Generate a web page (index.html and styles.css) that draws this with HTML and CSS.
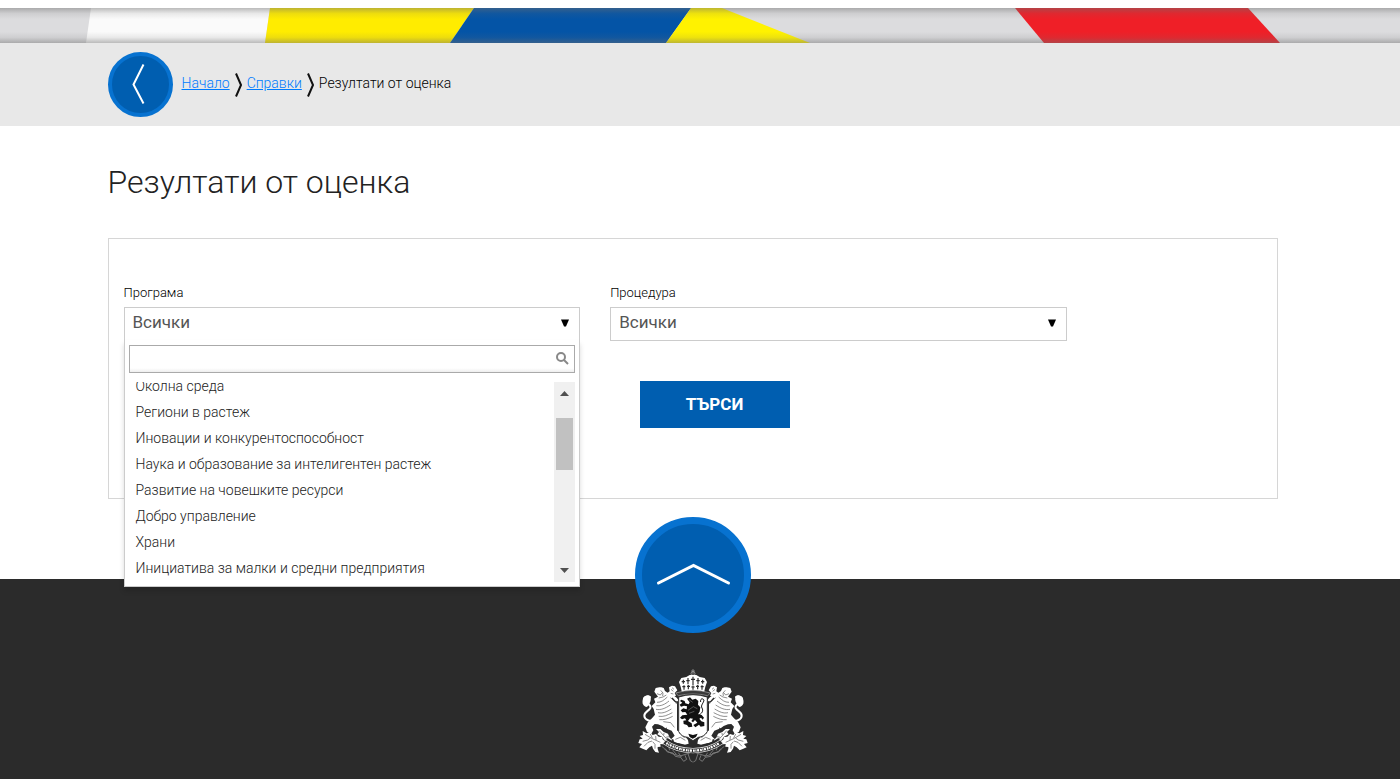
FILE: index.html
```html
<!DOCTYPE html>
<html lang="bg">
<head>
<meta charset="utf-8">
<meta name="viewport" content="width=device-width, initial-scale=1">
<title>Резултати от оценка</title>
<link rel="stylesheet" href="styles.css">
</head>
<body>
<div class="stripe">
  <svg class="stripe-art" viewBox="0 0 1400 35" preserveAspectRatio="none" aria-hidden="true">
    <path fill="#fafafa" d="M91 0H270L265 35H86z"/>
    <path fill="#ffec00" d="M270 0H474L450 35H265z"/>
    <path fill="#0454a6" d="M474 0H691L666 35H450z"/>
    <path fill="#fff200" d="M691 0H722L810 35H666z"/>
    <path fill="#ef1f27" d="M1015 0H1248L1280 35H1044z"/>
  </svg>
</div>

<nav class="crumb-bar" aria-label="Навигация">
  <div class="container crumbs">
    <a class="back" href="#" aria-label="Назад">
      <svg viewBox="0 0 65 65" aria-hidden="true"><path d="M35.500 12.500L25.500 32.500L35.500 51.500"/></svg>
    </a>
    <a class="crumb-text" href="#">Начало</a>
    <svg class="sep" viewBox="0 0 7 24" aria-hidden="true"><path d="M1 0.500L6 12L1 23.500"/></svg>
    <a class="crumb-text" href="#">Справки</a>
    <svg class="sep" viewBox="0 0 7 24" aria-hidden="true"><path d="M1 0.500L6 12L1 23.500"/></svg>
    <span class="crumb-text">Резултати от оценка</span>
  </div>
</nav>

<main class="content">
  <div class="container">
    <h1 class="title">Резултати от оценка</h1>
    <form class="search-box">
      <div class="field">
        <label for="program">Програма</label>
        <div class="select-wrap">
          <select id="program"><option>Всички</option></select>
          <svg class="arrow" viewBox="0 0 8 8" aria-hidden="true"><path d="M0 0.500H8L5 7.500H3z"/></svg>
          <div class="dropdown">
            <div class="filter">
              <input type="text" aria-label="Търсене на програма">
              <svg viewBox="0 0 13 13" aria-hidden="true"><circle cx="5" cy="5" r="4"/><path d="M8 8L12 12"/></svg>
            </div>
            <div class="results">
              <ul class="options" role="listbox" aria-label="Програма">
                <li role="option">Околна среда</li>
                <li role="option">Региони в растеж</li>
                <li role="option">Иновации и конкурентоспособност</li>
                <li role="option">Наука и образование за интелигентен растеж</li>
                <li role="option">Развитие на човешките ресурси</li>
                <li role="option">Добро управление</li>
                <li role="option">Храни</li>
                <li role="option">Инициатива за малки и средни предприятия</li>
              </ul>
              <div class="scrollbar" aria-hidden="true">
                <svg viewBox="0 0 9 5"><path d="M0 5L4.500 0L9 5z"/></svg>
                <span class="thumb"></span>
                <svg viewBox="0 0 9 5"><path d="M0 0L4.500 5L9 0z"/></svg>
              </div>
            </div>
          </div>
        </div>
      </div>
      <div class="field">
        <label for="procedure">Процедура</label>
        <div class="select-wrap">
          <select id="procedure"><option>Всички</option></select>
          <svg class="arrow" viewBox="0 0 8 8" aria-hidden="true"><path d="M0 0.500H8L5 7.500H3z"/></svg>
        </div>
      </div>
      <div class="actions"><button class="submit" type="submit">ТЪРСИ</button></div>
    </form>
  </div>
</main>

<footer class="footer">
  <div class="container footer-inner">
    <a class="to-top" href="#" aria-label="Нагоре">
      <svg viewBox="0 0 116 116" aria-hidden="true"><path d="M23.500 66L58.500 48.500L93.500 66"/></svg>
    </a>
    <svg class="crest" viewBox="24 24 330 288" role="img" aria-label="Герб на Република България">
      <defs>
        <g id="half">
          <!-- tail -->
          <path fill="none" stroke="#fff" stroke-width="6" stroke-linecap="round" d="M76 180C60 186 44 180 43 168C42 156 56 154 61 144C66 132 46 132 42 120C40 112 52 106 60 111"/>
          <path fill="#fff" d="M38 130C35 115 45 104 57 107C67 112 62 127 53 139C48 144 40 138 38 130z"/>
          <!-- head, mane and body -->
          <path fill="#fff" d="M78 102L73 95L77 84L88 82L94 82L101 84L105 93L114 99L118 108L128 104L140 113L147 122V214L134 218L126 208L116 200L106 205L97 198L84 193L74 192L66 200L70 211L64 221L51 215L46 202L54 186L66 175L75 164L71 147L65 138L76 127L72 116L84 110z"/>
          <path fill="#fff" d="M108 102L119 94L117 82L126 77L135 79L142 91L134 99L138 107L122 112z"/>
          <path fill="#fff" d="M112 192L132 192L146 211L151 230L138 239L124 237L134 227L125 212L110 206z"/>
          <g fill="none" stroke="#444" stroke-width="1.800">
            <path d="M81 101L91 105L97 98M92 91L99 99L98 108M86 114L99 111L109 105M81 127C94 127 101 121 112 111M79 137C93 139 105 133 117 123M78 148C92 151 106 145 121 135M84 158C98 161 109 156 124 147M86 169C101 171 111 166 127 158M88 179C103 180 112 177 128 169M121 113L133 121L140 132M100 185L122 188L133 202"/>
            <path d="M123 88L130 94M122 100L130 102M126 83L132 88"/>
          </g>
          <path fill="none" stroke="#2b2b2b" stroke-width="4" d="M126 114L134 123L143 128M143 124V212"/>
          <path fill="#2b2b2b" d="M82 196L97 202L108 209L100 214L88 207L75 207z"/>
          <!-- oak leaves -->
          <path fill="#fff" d="M38 213L50 220L60 215L68 225L78 222L86 230L96 231L98 238L107 245L99 253L91 252L92 260L83 261L83 267L87 278L76 276L69 266L66 257L58 262L49 271L38 266L28 262L36 252L25 249L29 238L38 236L29 228L39 225z"/>
          <path fill="none" stroke="#555" stroke-width="2" d="M45 223L65 235L91 247M38 244L53 240L61 234M42 259L54 247L66 243M61 222L67 234M77 228L78 240M75 266L75 253L68 245"/>
          <path fill="#fff" d="M78 207L91 207L101 216L114 221L119 233L127 240L117 250L106 244L96 230L82 223L87 216z"/>
          <path fill="none" stroke="#555" stroke-width="2" d="M88 212L100 226L115 242M102 219L101 226M117 230L107 232"/>
          <path fill="#fff" d="M130 235L151 218L162 225L174 240L176 251L164 254L148 250L132 248z"/>
          <path fill="none" stroke="#555" stroke-width="2" d="M136 238L151 232L166 241M153 223L164 234"/>
          <!-- crossed stems -->
          <path fill="none" stroke="#858585" stroke-width="2.500" d="M96 259C109 275 125 282 151 288L188 276M106 266L112 276L129 279L136 289L152 292L161 304L170 298L165 286M128 270L139 283M145 278L154 291M174 281L181 302L188 306M116 260L119 271"/>
        </g>
      </defs>
      <use href="#half"/>
      <use href="#half" transform="translate(378 0) scale(-1 1)"/>

      <!-- crown -->
      <path fill="none" stroke="#aaa" stroke-width="2" d="M189 27V45M183 33H195"/>
      <circle cx="189" cy="41" r="6" fill="none" stroke="#bbb" stroke-width="2"/>
      <path fill="#fff" d="M147 66L154 54L169 51L179 45H199L209 51L224 54L231 66L226 80L222 98Q189 88 156 98L152 80z"/>
      <path fill="none" stroke="#2b2b2b" stroke-width="3.500" d="M160 59V71M155 65H165M174 54V73M169 62H179M189 50V76M183 58H195M204 54V73M199 62H209M218 59V71M213 65H223M157 80H166M162 76V89M171 79H180M175 75V88M184 81H194M189 77V89M198 79H207M203 75V88M212 80H221M216 76V89"/>
      <path fill="#3a3a3a" stroke="#aaa" stroke-width="2" d="M137 99Q189 83 241 99L233 107Q189 97 145 107z"/>

      <!-- shield -->
      <path fill="#fff" stroke="#2b2b2b" stroke-width="3" d="M146 111Q189 97 232 111V215Q222 231 205 232L189 242L173 232Q155 231 146 215z"/>
      <g fill="#111">
        <path d="M171 116L180 112L187 119L197 116L205 123L204 134L211 142L209 155L204 163L215 165L222 173L218 179L213 173L208 176L214 184L223 187V198L212 200L207 194L196 202L190 195L202 188L195 180L189 187L184 183L189 176L180 175L174 183L185 190L187 200L176 202L171 195L161 192L160 182L169 181L165 175L156 178L150 173L157 166L172 164L166 156L157 157L152 151L160 145L170 148L171 139L162 137L153 140L149 134L157 128L150 123L154 119L164 123L166 130L176 133L179 127z"/>
        <path d="M175 221L189 225L203 221L198 231L188 236L179 231z"/>
      </g>
      <path fill="none" stroke="#111" stroke-width="3" d="M204 166C216 161 221 153 216 144C211 136 221 129 222 120C217 113 210 117 212 126"/>
      <path fill="none" stroke="#999" stroke-width="1.500" d="M177 119L188 127M174 151L190 140L202 146M177 160L193 154"/>

      <!-- motto ribbon -->
      <path fill="none" stroke="#2b2b2b" stroke-width="22" d="M106 243Q138 267 189 268Q240 267 272 243"/>
      <path fill="none" stroke="#ddd" stroke-width="16" d="M102 245Q138 271 189 272Q240 271 276 245"/>
      <path fill="none" stroke="#2b2b2b" stroke-width="12" d="M104 246Q138 271 189 272Q240 271 274 246"/>
      <path fill="none" stroke="#fff" stroke-width="7" stroke-dasharray="5 2 3 2 6 3" d="M109 249Q144 271 189 272Q234 271 269 249"/>
    </svg>
  </div>
</footer>
</body>
</html>
```
FILE: styles.css
```css
* { box-sizing: border-box; }

body {
  margin: 0;
  padding-top: 8px;
  background: #fff;
  color: #000;
  font-family: Roboto, "Noto Sans", sans-serif;
  font-size: 14px;
  font-weight: 300;
  line-height: 20px;
}

.container {
  width: 100%;
  max-width: 1170px;
  margin: 0 auto;
}

.stripe {
  position: relative;
  height: 35px;
  background: #dcdcde;
}

.stripe::after {
  content: "";
  position: absolute;
  inset: 0;
  background: linear-gradient(rgba(110, 110, 110, .45), rgba(110, 110, 110, .12) 16%, transparent 32%, transparent 68%, rgba(110, 110, 110, .12) 84%, rgba(110, 110, 110, .45));
}

.stripe-art {
  display: block;
  width: 100%;
  height: 100%;
}

.crumb-bar {
  padding: 9px 15px 9px 0;
  background: #e8e8e8;
}

.crumbs {
  display: flex;
  align-items: center;
  gap: 5px;
}

.back {
  width: 65px;
  height: 65px;
  margin-right: 4px;
  border: 4px solid #0772d0;
  border-radius: 50%;
  background: #005eb0;
}

.back svg {
  display: block;
  width: 65px;
  height: 65px;
  margin: -4px;
  fill: none;
  stroke: #fff;
  stroke-width: 2;
}

.crumb-text { padding-bottom: 3px; }

a.crumb-text { color: #007bff; }

.sep {
  width: 7px;
  height: 24px;
  fill: none;
  stroke: #111;
  stroke-width: 2;
}

.content { padding: 32px 15px 80px 0; }

.title {
  margin: 0 0 32px;
  color: #222;
  font-size: 32px;
  font-weight: 300;
  line-height: 48px;
}

.search-box {
  display: grid;
  grid-template-columns: 5fr 5fr 2fr;
  padding: 44px 0 70px;
  border: 1px solid #d6d6d6;
}

.field {
  min-width: 0;
  padding: 0 15px;
}

.field label {
  display: block;
  margin-bottom: 4px;
  font-size: 13px;
}

.select-wrap { position: relative; }

.select-wrap select {
  display: block;
  width: 100%;
  height: 34px;
  padding: 0 28px 4px 8px;
  border: 1px solid #ccc;
  border-radius: 0;
  appearance: none;
  background: #fff;
  color: #555;
  font-family: inherit;
  font-size: 17px;
  font-weight: 400;
}

.arrow {
  position: absolute;
  top: 12px;
  right: 11px;
  width: 8px;
  height: 8px;
}

.dropdown {
  position: absolute;
  top: 33px;
  left: 0;
  width: 100%;
  padding: 5px 4px 4px;
  border: 1px solid #ccc;
  border-top: 0;
  background: #fff;
  box-shadow: 0 4px 5px rgba(0, 0, 0, .15);
  z-index: 2;
}

.filter { position: relative; }

.filter input {
  display: block;
  width: 100%;
  height: 28px;
  padding: 4px 20px 4px 5px;
  border: 1px solid #aaa;
  border-radius: 0;
  background: linear-gradient(#fff 85%, #eee);
  font: inherit;
}

.filter svg {
  position: absolute;
  top: 7px;
  right: 6px;
  width: 13px;
  height: 13px;
  fill: none;
  stroke: #888;
  stroke-width: 2;
}

.results {
  display: flex;
  height: 200px;
  margin-top: 9px;
  overflow: hidden;
}

.options {
  display: flex;
  flex: 1;
  flex-direction: column;
  justify-content: flex-end;
  margin: 0;
  padding: 0 7px 1px;
  list-style: none;
}

.options li {
  flex: none;
  padding: 3px 0;
  color: #222;
}

.scrollbar {
  display: flex;
  flex-direction: column;
  align-items: center;
  width: 21px;
  padding: 9px 2px;
  background: #f0f0f0;
}

.scrollbar svg {
  flex: none;
  width: 9px;
  height: 5px;
  fill: #505050;
}

.thumb {
  width: 17px;
  height: 52px;
  margin: 22px 0 auto;
  background: #c1c1c1;
}

.actions {
  grid-column: 1 / -1;
  display: flex;
  justify-content: center;
  margin-top: 40px;
  padding-left: 44px;
}

.submit {
  width: 150px;
  height: 47px;
  padding: 0 0 2px;
  border: 0;
  background: #005eb0;
  color: #fff;
  font-family: inherit;
  font-size: 17px;
  font-weight: 700;
}

.footer {
  padding: 89px 14px 15px 0;
  background: #2b2b2b;
}

.footer-inner {
  position: relative;
  display: flex;
  justify-content: center;
}

.to-top {
  position: absolute;
  top: -151px;
  left: 50%;
  width: 116px;
  height: 116px;
  margin-left: -58px;
  border: 7px solid #0772d0;
  border-radius: 50%;
  background: #005eb0;
}

.to-top svg {
  display: block;
  width: 116px;
  height: 116px;
  margin: -7px;
  fill: none;
  stroke: #fff;
  stroke-width: 3;
  stroke-linecap: round;
}

.crest {
  width: 110px;
  height: 96px;
}
```
